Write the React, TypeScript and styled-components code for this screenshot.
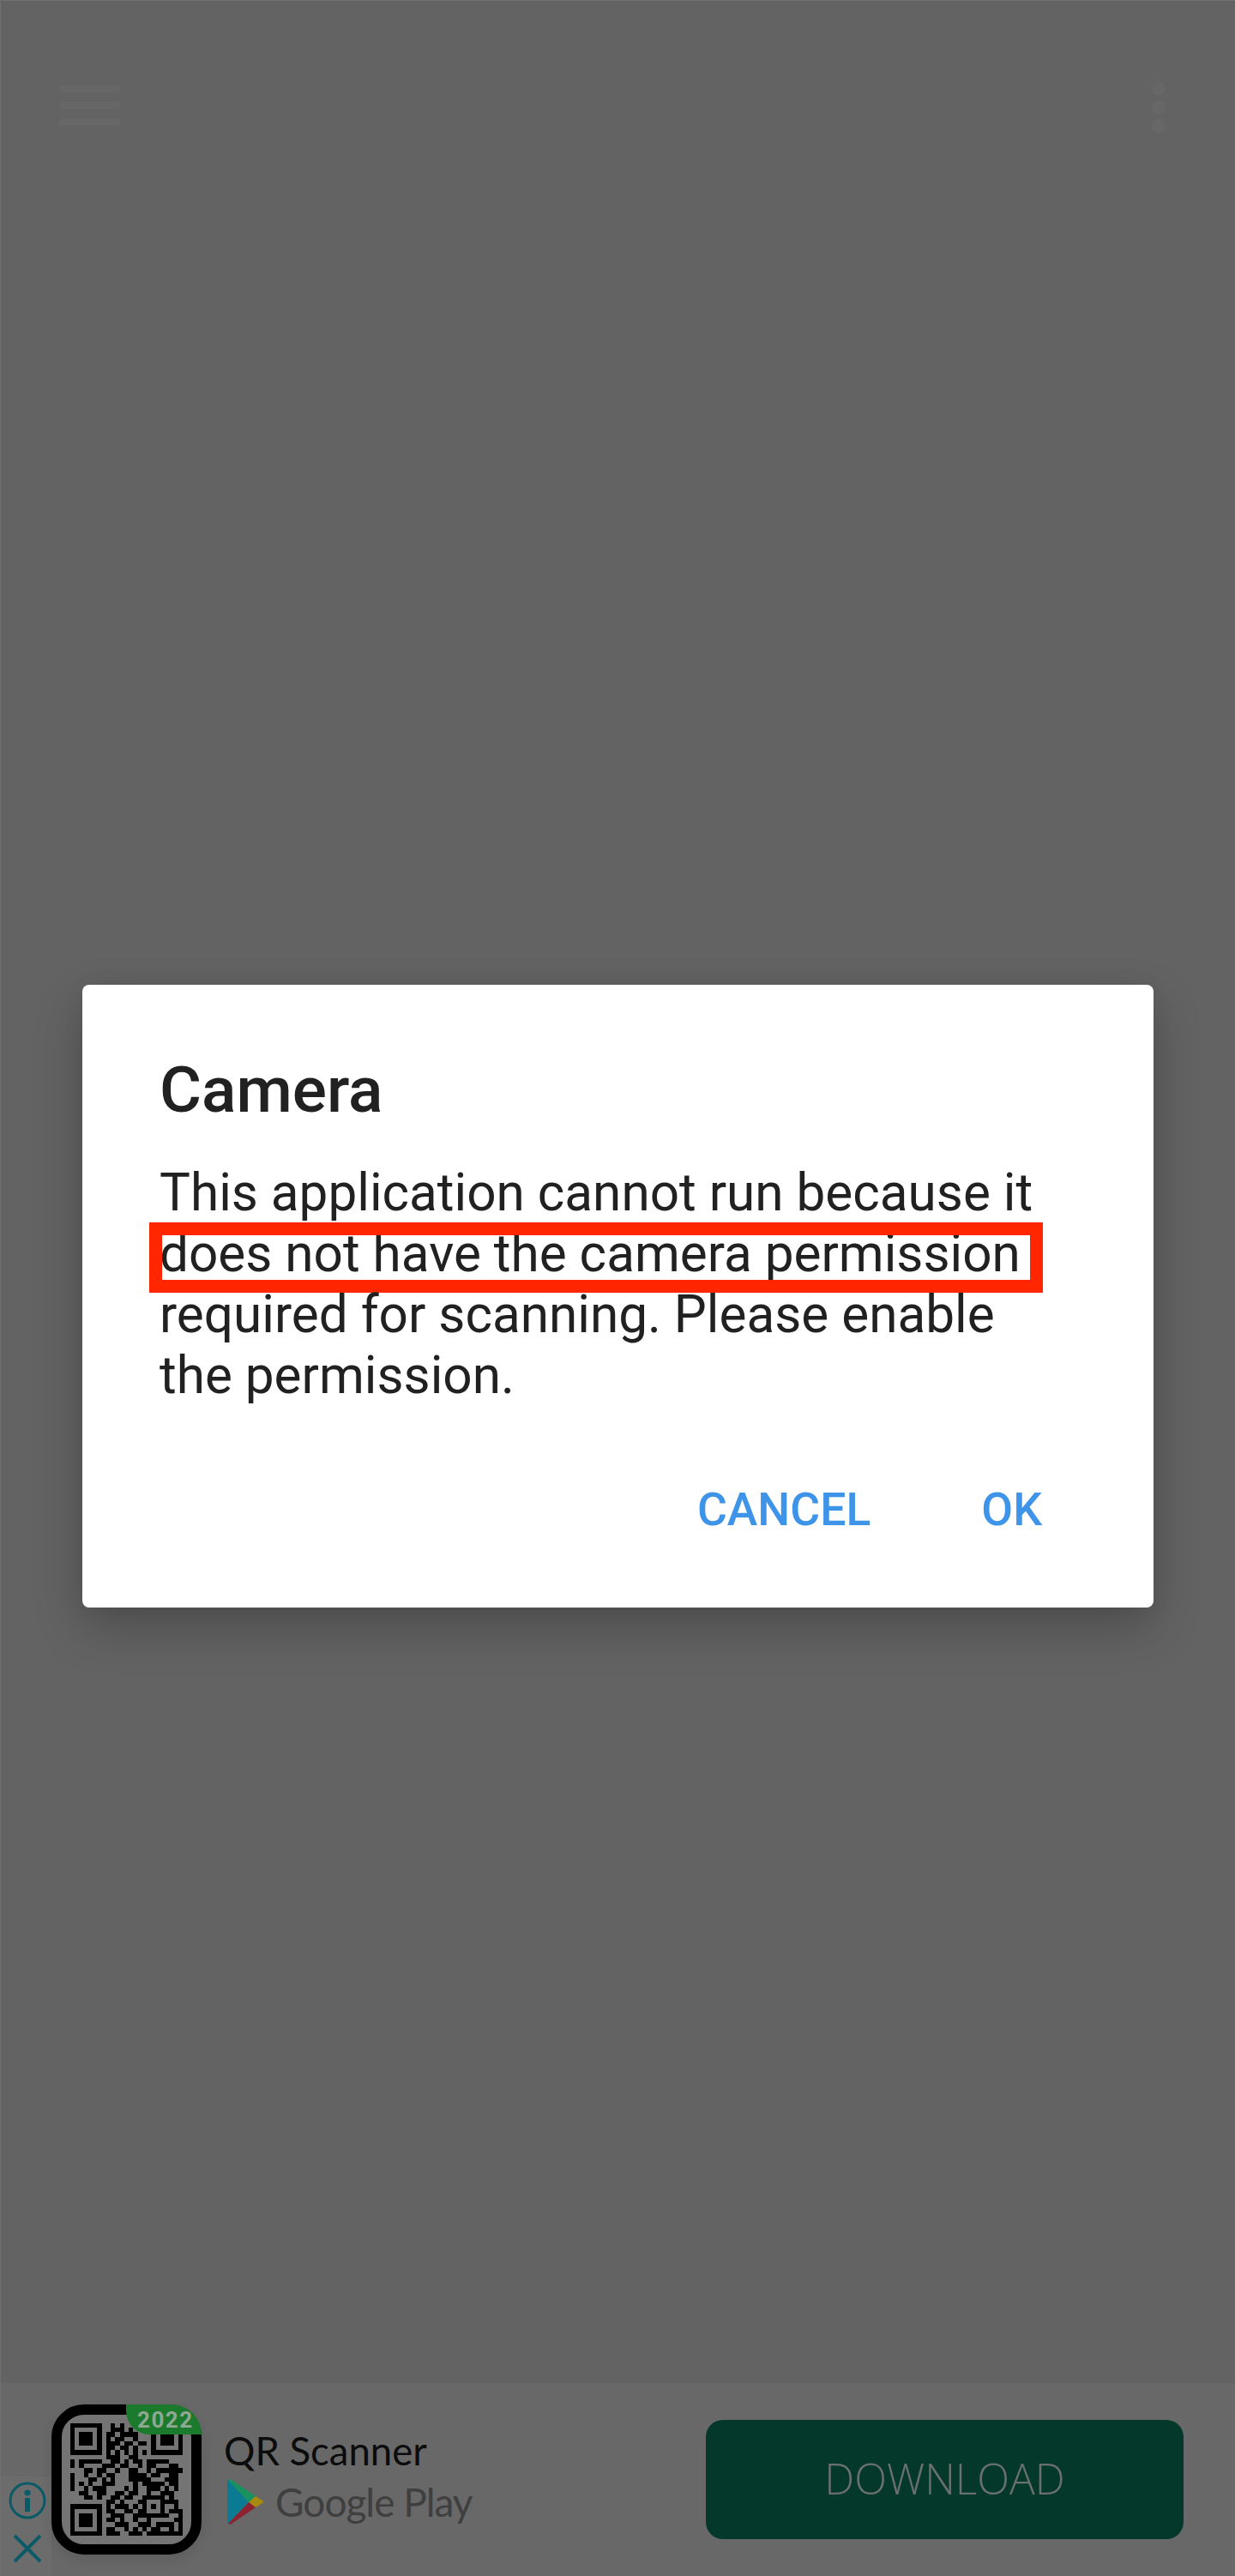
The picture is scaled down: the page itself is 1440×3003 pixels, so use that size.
import styled, { createGlobalStyle } from "styled-components";

const QR_ROWS = [
  "1111111001010000001111111",
  "1000001001110100001000001",
  "1011101011011110001011101",
  "1011101010110010001011101",
  "1011101011101101101011101",
  "1000001011011010001000001",
  "1111111010101010101111111",
  "0000000011100110000000000",
  "1011111001101011011111000",
  "1010000111011001011000110",
  "0001101100100110010111111",
  "1001001011000111101100110",
  "1000110101000111110001110",
  "1010100111000010111110110",
  "1001011100001010011101010",
  "0011001100110110010011100",
  "0001101001101100111110100",
  "0000000011010001100011110",
  "1111111010111010101010010",
  "1000001011001101100010111",
  "1011101001110011111111001",
  "1011101011010010010000011",
  "1011101000111001110111101",
  "1000001011001010101100101",
  "1111111011100111011111111",
];

const qrPath = QR_ROWS.map((row, y) =>
  row
    .split("")
    .map((cell, x) => (cell === "1" ? `M${x} ${y}h1v1h-1z` : ""))
    .join("")
).join("");

const App = () => {
  return (
    <>
      <GlobalStyle />
      <Page>
        <TopBar>
          <Hamburger>
            <span />
            <span />
            <span />
          </Hamburger>
          <Kebab>
            <span />
            <span />
            <span />
          </Kebab>
        </TopBar>

        <Main>
          <Dialog>
            <Title>Camera</Title>
            <Message>
              <Line>This application cannot run because it</Line>
              <Line $marked>does not have the camera permission</Line>
              <Line>required for scanning. Please enable</Line>
              <Line>the permission.</Line>
            </Message>
            <Actions>
              <ActionButton>CANCEL</ActionButton>
              <ActionButton>OK</ActionButton>
            </Actions>
          </Dialog>
        </Main>

        <AdBanner>
          <AdChoices>
            <svg width="44" height="44" viewBox="0 0 44 44" fill="none">
              <circle cx="22" cy="22" r="20" stroke="#0b5a68" strokeWidth="3" />
              <circle cx="22" cy="13" r="3.6" fill="#0b5a68" />
              <rect x="19" y="19" width="6" height="16" fill="#0b5a68" />
            </svg>
            <svg width="34" height="34" viewBox="0 0 34 34" fill="none">
              <path d="M2 2L32 32M32 2L2 32" stroke="#0b5a68" strokeWidth="4" />
            </svg>
          </AdChoices>

          <AppIcon>
            <QrCode viewBox="0 0 25 25" shapeRendering="crispEdges">
              <path d={qrPath} fill="#000" />
            </QrCode>
            <YearBadge>2022</YearBadge>
          </AppIcon>

          <AppInfo>
            <AppName>QR Scanner</AppName>
            <StoreRow>
              <svg width="43" height="53" viewBox="0 0 43 53">
                <path d="M1 1L25 27L1 52Q0 51 0 49V4Q0 2 1 1Z" fill="#0b7a93" />
                <path d="M1 1Q3 0 5 1L33 20L25 27Z" fill="#17935f" />
                <path d="M33 20L41 25Q43 26.500 41 28L33 33L25 27Z" fill="#a98a0c" />
                <path d="M1 52L25 27L33 33L5 52Q3 53 1 52Z" fill="#8f2230" />
              </svg>
              <StoreName>Google Play</StoreName>
            </StoreRow>
          </AppInfo>

          <DownloadButton>DOWNLOAD</DownloadButton>
        </AdBanner>
      </Page>
    </>
  );
};

const GlobalStyle = createGlobalStyle`
  html, body {
    margin: 0;
    padding: 0;
    background: #636363;
  }
  *, *::before, *::after {
    box-sizing: border-box;
  }
`;

const Page = styled.div`
  position: relative;
  width: 1440px;
  height: 3003px;
  display: flex;
  flex-direction: column;
  overflow: hidden;
  background: #636363;
  border-top: 1px solid #707070;
  border-left: 1px solid #707070;
  font-family: Roboto, "Liberation Sans", sans-serif;
`;

const TopBar = styled.div`
  display: flex;
  justify-content: space-between;
  align-items: center;
  padding: 94px 81px 0 69px;
`;

const Hamburger = styled.div`
  display: flex;
  flex-direction: column;
  gap: 11px;
  width: 70px;
  margin-bottom: 4px;

  span {
    height: 8px;
    background: #676767;
  }
`;

const Kebab = styled.div`
  display: flex;
  flex-direction: column;
  gap: 6px;

  span {
    width: 16px;
    height: 16px;
    border-radius: 50%;
    background: #676767;
  }
`;

const Main = styled.main`
  flex: 1;
  padding: 993px 95px 0;
`;

const Dialog = styled.section`
  height: 726px;
  padding: 80px 130px 0 90px;
  background: #fff;
  border-radius: 8px;
  box-shadow: 0 24px 56px rgba(0, 0, 0, 0.22), 0 0 24px rgba(0, 0, 0, 0.06);
`;

const Title = styled.h2`
  margin: 0;
  font-size: 75px;
  font-weight: 500;
  line-height: 84px;
  color: #212121;
`;

const Message = styled.div`
  margin-top: 43px;
  font-size: 60.25px;
  line-height: 71px;
  color: #212121;
  white-space: nowrap;
`;

const Line = styled.div<{ $marked?: boolean }>`
  position: relative;

  ${(props) =>
    props.$marked &&
    `
    &::after {
      content: "";
      position: absolute;
      left: -12px;
      top: -1px;
      width: 1042px;
      height: 82px;
      border: 15px solid #ff2600;
    }
  `}
`;

const Actions = styled.div`
  display: flex;
  justify-content: flex-end;
  gap: 129px;
  margin-top: 91px;
`;

const ActionButton = styled.div`
  font-size: 53.5px;
  font-weight: 500;
  line-height: 60px;
  color: #3d94e8;
`;

const AdBanner = styled.footer`
  position: relative;
  height: 225px;
  display: flex;
  align-items: center;
  padding: 0 60px 0 59px;
  background: #686868;
`;

const AdChoices = styled.div`
  position: absolute;
  left: -1px;
  bottom: 0;
  width: 60px;
  height: 116px;
  padding: 6px 0 0 10px;
  display: flex;
  flex-direction: column;
  gap: 17px;
  background: #6c6c6c;

  svg:last-child {
    margin-left: 5px;
  }
`;

const AppIcon = styled.div`
  position: relative;
  flex: none;
  width: 175px;
  height: 175px;
  padding: 10px;
  background: #747474;
  border: 12px solid #000;
  border-radius: 38px;
  box-shadow: 0 6px 14px rgba(0, 0, 0, 0.1);
`;

const QrCode = styled.svg`
  display: block;
  width: 131px;
  height: 131px;
`;

const YearBadge = styled.div`
  position: absolute;
  top: -12px;
  right: -12px;
  width: 88px;
  height: 35px;
  padding-left: 13px;
  background: #1c7a2c;
  border-radius: 0 38px 0 30px;
  font-size: 26px;
  font-weight: 700;
  line-height: 36px;
  letter-spacing: 1.5px;
  color: #8fa892;
`;

const AppInfo = styled.div`
  flex: none;
  margin-left: 26px;
  display: flex;
  flex-direction: column;
  gap: 7px;
  margin-bottom: 8px;
`;

const AppName = styled.div`
  font-family: Lato, Roboto, sans-serif;
  font-size: 45.5px;
  font-weight: 400;
  line-height: 52px;
  color: #0c0c0c;
`;

const StoreRow = styled.div`
  display: flex;
  align-items: center;
  gap: 13px;
  margin-left: 4px;
`;

const StoreName = styled.div`
  font-family: Lato, Roboto, sans-serif;
  font-size: 46px;
  font-weight: 400;
  line-height: 53px;
  letter-spacing: -1px;
  color: #3f3f3f;
`;

const DownloadButton = styled.div`
  margin-left: auto;
  width: 557px;
  height: 139px;
  padding-bottom: 4px;
  display: flex;
  align-items: center;
  justify-content: center;
  border-radius: 20px;
  background: #03382a;
  font-family: "Open Sans", sans-serif;
  font-size: 49.5px;
  font-weight: 300;
  color: #6a706d;
`;

export default App;
